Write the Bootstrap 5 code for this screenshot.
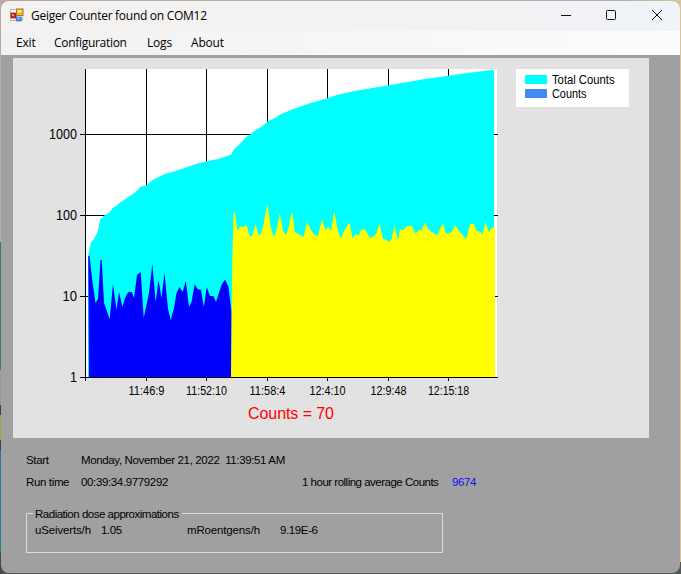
<!DOCTYPE html>
<html lang="en">
<head>
<meta charset="utf-8">
<title>Geiger Counter</title>
<link href="https://cdn.jsdelivr.net/npm/bootstrap@5.3.0/dist/css/bootstrap.min.css" rel="stylesheet">
<style>
html,body{height:100%;overflow:hidden}
body{background:linear-gradient(90deg,#c9b7a0 0,#d2bfa2 50%,#cdb88f 100%);font-family:"Liberation Sans",Arial,sans-serif;color:#000}
.desk{height:574px;padding:1px;background:linear-gradient(#b5aca4 0 242px,#3f7478 242px 370px,#989898 370px 405px,#404044 405px 415px,#a6a33e 415px 440px,#444 440px 450px,#257a94 450px 552px,#484848 552px) left/2px 100% no-repeat,linear-gradient(#555,#555) bottom/100% 12px no-repeat,linear-gradient(90deg,#b3a9a0,#adadad 20%,#adadad 90%,#d9c49c)}
.win{background:#a0a0a0;border-radius:8px;overflow:hidden;height:572px}
.titlebar{height:30px;background:linear-gradient(90deg,#f4f2f0,#f2f2f2 50%,#f0f3f7);font:12px/30px "Open Sans","Noto Sans",sans-serif;padding-left:9px}
.titletext{margin-left:7px;letter-spacing:-.28px}
.menus{height:24px;background:linear-gradient(90deg,#f1f1f1,#fcfcfc);font:12px/24px "Open Sans","Noto Sans",sans-serif;padding-left:15px;letter-spacing:-.18px}
.menus span{display:block;white-space:nowrap}
.menus span:nth-child(2){letter-spacing:-.3px}
.chart{display:block;margin:3px 0 0 12px}
.readout{padding-left:25px;font-size:11.5px;line-height:14px;white-space:pre;letter-spacing:-.36px}
.k{width:55px}
.avg{width:150px;letter-spacing:-.5px}
.dose{width:417px;height:44px;margin:18px 0 0 25px;font-size:11.5px;line-height:14px;white-space:nowrap;letter-spacing:-.38px}
.dose .legendline{line-height:14px}
.dose .legendline span{padding:0 3px 0 2px;letter-spacing:-.49px}
.dose .legendline::before{content:"";width:7px;border-top:1px solid #dcdcdc;border-left:1px solid #dcdcdc;height:8px;margin-top:6px}
.dose .legendline::after{content:"";flex:1;border-top:1px solid #dcdcdc;border-right:1px solid #dcdcdc;height:8px;margin-top:6px}
.dose .vals{height:32px;border:1px solid #dcdcdc;border-top:0;padding:2px 0 0 8px}
.dose .unit{letter-spacing:-.15px}
</style>
</head>
<body>
<div class="desk">
<div class="win d-flex flex-column">
  <div class="titlebar d-flex flex-shrink-0">
    <svg width="14" height="14" viewBox="0 0 14 14" style="margin-top:7px" class="flex-shrink-0">
      <path d="M.5 1.5h6v11h-6zM.5 12.5h12v-4" fill="#f8f8f8" stroke="#b9b9b9"/>
      <rect x="1" y="5" width="5" height="5" fill="#c22b22" stroke="#8e1a15" stroke-width=".7"/><rect x="2" y="6" width="2" height="2" fill="#f08b7a"/>
      <rect x="6.5" y="1" width="6.5" height="6.5" fill="#f3b72c" stroke="#a97813"/><rect x="7.5" y="2" width="4" height="2.6" fill="#ffe28a"/>
      <rect x="6.2" y="9" width="5" height="4" fill="#4288e6" stroke="#2e62b8" stroke-width=".6"/><rect x="7" y="9.6" width="3" height="1.4" fill="#8cbcff"/>
    </svg>
    <div class="titletext">Geiger Counter found on COM12</div>
    <svg class="ms-auto flex-shrink-0" width="120" height="30" viewBox="560 1 120 30" fill="none" stroke="#111">
      <path d="M561 15.5h10"/><rect x="606.5" y="10.5" width="9" height="9" rx="1"/><path d="M652 10l10 10M662 10l-10 10"/>
    </svg>
  </div>
  <div class="menus d-flex flex-shrink-0"><span style="width:38px">Exit</span><span style="width:93px">Configuration</span><span style="width:44px">Logs</span><span>About</span></div>
  <svg class="chart flex-shrink-0" width="636" height="380" viewBox="13 58 636 380" font-family="Liberation Sans, Arial, sans-serif" font-size="12">
    <rect x="13" y="58" width="636" height="380" fill="#e2e2e2"/>
    <rect x="85" y="69" width="412" height="308" fill="#fff"/>
    <path d="M146.5 69V377M206.5 69V377M267.5 69V377M327.5 69V377M388.5 69V377M448.5 69V377M80 134.5H498M80 215.5H498M80 296.5H498" stroke="#000" fill="none"/>
    <path fill="#0ff" d="M88 377V256L90.7 243 93.3 240 97.7 232 100.3 219 105 215 110 212 112.5 208.3 116 206 119 203.3 125 199.3 130 196 135.3 192.3 140.7 186.7 146.7 185 152.3 180.3 165 173.7 175 171.3 185 167.7 198.3 163.3 206.7 161.3 218.3 159 226.7 156 231.3 154.7 233.5 150 240 143.7 246.7 136.7 250.7 134 255.7 130 261.7 126.7 267.7 121.3 275 118 280.7 114.3 293.3 109 310 103.3 327.3 98.3 336.7 95 353.3 91.3 388.3 85.3 426.7 78.7 448.3 75.7 473.3 72.3 494 69.7V377Z"/>
    <path fill="#00f" d="M89 377L88.3 256H89.5L92 278 95.5 303 98 299 100.5 260H101.7L104 303 109.7 319 113 284 116.5 310 119 292 122.5 307 125 298 128.3 292H131.7L134 298 137 275 140.7 272 143.7 318 149 293 152.3 264 155.7 302 158.5 280 161.5 298 164.5 273 168 309 170.7 320 174 308 176.5 293 179.5 287 182.7 292 185.8 281 189 307 191.5 302 194.7 284 197.5 289 201 290 203.8 307 206.7 287 210 296 213.5 296 216 302 219.5 291 222 284 225 279.5 228.5 287 231.5 312V377Z"/>
    <path fill="#ff0" d="M231 377L232.3 262 233.5 213H235L237.5 231 240 226 243.5 227 246.7 225 249 234 250.7 237 252.5 235 255.5 224 258.5 235 261 234 263.5 224 267.5 203.5 270.5 226 273.5 237 276 232 279.7 213.5 283 231 285.7 235 288 230 292 211 295 232.5 299 234 303.7 237 306.7 222 310 228 313.5 234 318 236 322 219 325.5 230 328.5 227 331 231 334.3 211 337.5 229 340.7 238.5 344 231 349.5 222.5 352.7 238.5 355.5 234 358.7 235.5 361 230 364 229 366 231 370.3 238 374 236 376.5 233 379.5 223.5 383 239 386 239.5 388.7 242 391.5 239 394.7 225 397.7 240.5 400.3 229 404 230 406.5 226 411.7 226 415.7 234 418.5 230 422 230 425 222 428 229 432 232 437 235.5 440 229 443 223.5 446 234 452 232 455 225 459 231 462 234.5 466.3 239 470 224 474 224 476.5 231 479.5 231.5 482.5 234 485.7 222 488.5 232 491 228.5 495 227V377Z"/>
    <path d="M85.5 69V381M80 377.5H498M146.5 377v4M206.5 377v4M267.5 377v4M327.5 377v4M388.5 377v4M448.5 377v4" stroke="#000" fill="none"/>
    <g font-size="14">
      <text x="49" y="139" textLength="28" lengthAdjust="spacingAndGlyphs">1000</text><text x="56" y="220" textLength="21" lengthAdjust="spacingAndGlyphs">100</text><text x="62.5" y="301" textLength="14.5" lengthAdjust="spacingAndGlyphs">10</text><text x="70" y="382" textLength="7" lengthAdjust="spacingAndGlyphs">1</text>
    </g>
    <text x="128.5" y="395" textLength="36" lengthAdjust="spacingAndGlyphs">11:46:9</text><text x="186" y="395" textLength="41" lengthAdjust="spacingAndGlyphs">11:52:10</text><text x="249.5" y="395" textLength="36" lengthAdjust="spacingAndGlyphs">11:58:4</text><text x="309.5" y="395" textLength="36" lengthAdjust="spacingAndGlyphs">12:4:10</text><text x="370.5" y="395" textLength="36" lengthAdjust="spacingAndGlyphs">12:9:48</text><text x="428" y="395" textLength="41" lengthAdjust="spacingAndGlyphs">12:15:18</text>
    <text x="248" y="419" font-size="16" fill="red" textLength="86">Counts = 70</text>
    <rect x="516" y="69" width="113" height="38" fill="#fff"/>
    <rect x="525" y="75" width="22" height="9" fill="#0ff"/><rect x="525" y="89" width="22" height="9" fill="#418cf0"/>
    <text x="552" y="84" textLength="62.5" lengthAdjust="spacingAndGlyphs">Total Counts</text><text x="552" y="98" textLength="34.5" lengthAdjust="spacingAndGlyphs">Counts</text>
  </svg>
  <div class="readout d-flex" style="margin-top:15px"><span class="k">Start</span><span class="date">Monday, November 21, 2022  11:39:51 AM</span></div>
  <div class="readout d-flex" style="margin-top:8px"><span class="k">Run time</span><span style="width:221px">00:39:34.9779292</span><span class="avg">1 hour rolling average Counts</span><span style="color:#1010f0">9674</span></div>
  <div class="dose flex-shrink-0"><div class="legendline d-flex"><span>Radiation dose approximations</span></div>
    <div class="vals d-flex"><span class="unit" style="width:66px">uSeiverts/h</span><span style="width:86px">1.05</span><span class="unit" style="width:93px">mRoentgens/h</span><span>9.19E-6</span></div></div>
</div>
</div>
<script src="https://cdn.jsdelivr.net/npm/bootstrap@5.3.0/dist/js/bootstrap.bundle.min.js"></script>
</body>
</html>
